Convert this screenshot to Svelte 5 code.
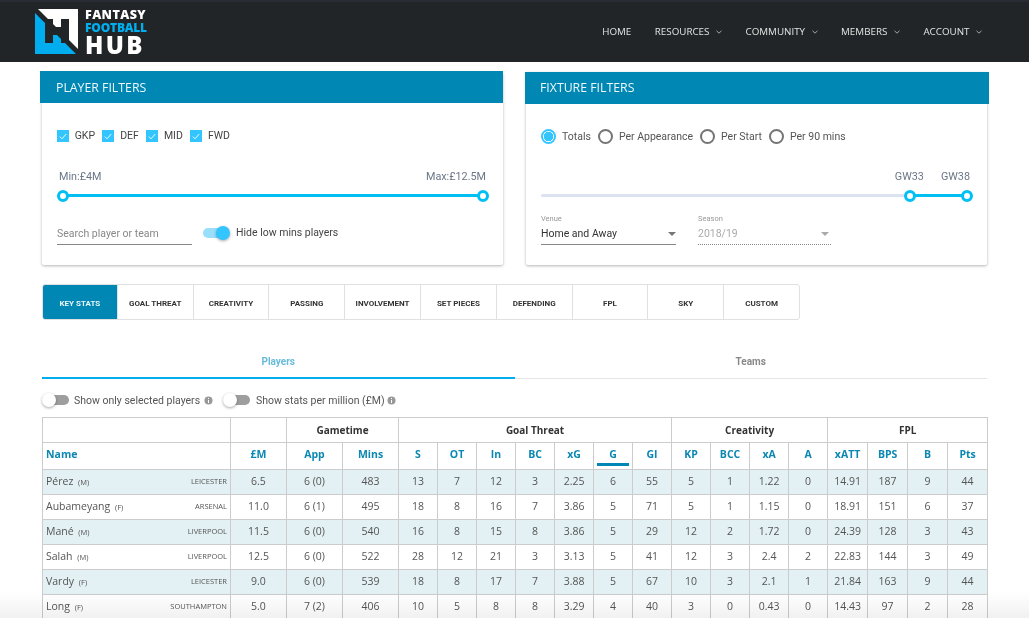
<script>
  const nav = [
    { label: 'Home', caret: false },
    { label: 'Resources', caret: true },
    { label: 'Community', caret: true },
    { label: 'Members', caret: true },
    { label: 'Account', caret: true }
  ];
  const positions = ['GKP', 'DEF', 'MID', 'FWD'];
  const modes = ['Totals', 'Per Appearance', 'Per Start', 'Per 90 mins'];
  const tabs = ['Key Stats', 'Goal Threat', 'Creativity', 'Passing', 'Involvement', 'Set Pieces', 'Defending', 'FPL', 'Sky', 'Custom'];
  const widths = [188, 56, 56, 56, 39, 39, 39, 39, 39, 39, 39, 39, 39, 39, 39, 40, 40, 40, 40];
  const groups = [
    { label: '', span: 1 },
    { label: '', span: 1 },
    { label: 'Gametime', span: 2 },
    { label: 'Goal Threat', span: 7 },
    { label: 'Creativity', span: 4 },
    { label: 'FPL', span: 4 }
  ];
  const columns = ['£M', 'App', 'Mins', 'S', 'OT', 'In', 'BC', 'xG', 'G', 'GI', 'KP', 'BCC', 'xA', 'A', 'xATT', 'BPS', 'B', 'Pts'];
  const rows = [
    { name: 'Pérez', pos: 'M', team: 'Leicester', stats: ['6.5', '6 (0)', 483, 13, 7, 12, 3, '2.25', 6, 55, 5, 1, '1.22', 0, '14.91', 187, 9, 44] },
    { name: 'Aubameyang', pos: 'F', team: 'Arsenal', stats: ['11.0', '6 (1)', 495, 18, 8, 16, 7, '3.86', 5, 71, 5, 1, '1.15', 0, '18.91', 151, 6, 37] },
    { name: 'Mané', pos: 'M', team: 'Liverpool', stats: ['11.5', '6 (0)', 540, 16, 8, 15, 8, '3.86', 5, 29, 12, 2, '1.72', 0, '24.39', 128, 3, 43] },
    { name: 'Salah', pos: 'M', team: 'Liverpool', stats: ['12.5', '6 (0)', 522, 28, 12, 21, 3, '3.13', 5, 41, 12, 3, '2.4', 2, '22.83', 144, 3, 49] },
    { name: 'Vardy', pos: 'F', team: 'Leicester', stats: ['9.0', '6 (0)', 539, 18, 8, 17, 7, '3.88', 5, 67, 10, 3, '2.1', 1, '21.84', 163, 9, 44] },
    { name: 'Long', pos: 'F', team: 'Southampton', stats: ['5.0', '7 (2)', 406, 10, 5, 8, 8, '3.29', 4, 40, 3, 0, '0.43', 0, '14.43', 97, 2, 28] }
  ];
</script>

<div class="page">
  <header class="topbar">
    <div class="logo">
      <svg width="45" height="45" viewBox="0 0 45 45">
        <path d="M3 0H43V40Z" fill="#fff" />
        <path d="M0 4V45H41Z" fill="#00aeef" />
        <path d="M10 10H18V18H26V10H34V34H26V26H18V34H10Z" fill="#212527" />
      </svg>
      <div class="wordmark">
        <span class="word-top">FANTASY</span>
        <span class="word-mid">FOOTBALL</span>
        <span class="word-hub">HUB</span>
      </div>
    </div>
    <nav class="nav">
      {#each nav as item}
        <span class="nav-item">
          {item.label}
          {#if item.caret}
            <svg width="6" height="4" viewBox="0 0 6 4"><path d="M.5.8 3 3.2 5.5.8" fill="none" stroke="#c9cbcc" stroke-width=".8" /></svg>
          {/if}
        </span>
      {/each}
    </nav>
  </header>

  <section class="filters">
    <div class="card left">
      <h2>Player Filters</h2>
      <div class="card-body">
        <div class="checks">
          {#each positions as p}
            <span class="check">
              <span class="box">
                <svg width="8" height="7" viewBox="0 0 8 7"><path d="M.8 3.6 3 5.8 7.2 1" fill="none" stroke="#fff" stroke-width=".9" /></svg>
              </span>
              {p}
            </span>
          {/each}
        </div>
        <div class="range-labels">
          <span>Min:£4M</span>
          <span>Max:£12.5M</span>
        </div>
        <div class="slider full">
          <span class="handle"></span>
          <span class="handle"></span>
        </div>
        <div class="search-row">
          <div class="search">Search player or team</div>
          <span class="switch on"><span class="knob"></span></span>
          <span class="switch-label">Hide low mins players</span>
        </div>
      </div>
    </div>

    <div class="card right">
      <h2>Fixture Filters</h2>
      <div class="card-body">
        <div class="radios">
          {#each modes as mode, i}
            <span class="radio" class:selected={i === 0}>
              <span class="ring"></span>
              {mode}
            </span>
          {/each}
        </div>
        <div class="gw-labels">
          <span>GW33</span>
          <span>GW38</span>
        </div>
        <div class="slider partial">
          <span class="fill">
            <span class="handle"></span>
            <span class="handle"></span>
          </span>
        </div>
        <div class="selects">
          <div class="select venue">
            <span class="select-label">Venue</span>
            <span class="select-value">Home and Away <i class="arrow"></i></span>
          </div>
          <div class="select season">
            <span class="select-label">Season</span>
            <span class="select-value">2018/19 <i class="arrow"></i></span>
          </div>
        </div>
      </div>
    </div>
  </section>

  <div class="stat-tabs">
    {#each tabs as tab, i}
      <span class="stat-tab" class:active={i === 0}>{tab}</span>
    {/each}
  </div>

  <div class="view-tabs">
    <span class="view-tab current">Players</span>
    <span class="view-tab">Teams</span>
  </div>

  <div class="toggles">
    <span class="switch off"><span class="knob"></span></span>
    <span class="toggle-text">Show only selected players</span>
    <svg class="info" width="9" height="9" viewBox="0 0 9 9"><circle cx="4.5" cy="4.5" r="4" fill="#999" /><path d="M4.5 2v1M4.5 4v3" stroke="#fff" stroke-width="1" /></svg>
    <span class="switch off second"><span class="knob"></span></span>
    <span class="toggle-text">Show stats per million (£M)</span>
    <svg class="info last" width="9" height="9" viewBox="0 0 9 9"><circle cx="4.5" cy="4.5" r="4" fill="#999" /><path d="M4.5 2v1M4.5 4v3" stroke="#fff" stroke-width="1" /></svg>
  </div>

  <table class="stats">
    <colgroup>
      {#each widths as w}
        <col style="width: {w}px" />
      {/each}
    </colgroup>
    <thead>
      <tr class="group-row">
        {#each groups as g}
          <th colspan={g.span}>{g.label}</th>
        {/each}
      </tr>
      <tr class="col-row">
        <th class="name-head">Name</th>
        {#each columns as c}
          <th><span class:sorted={c === 'G'}>{c}</span></th>
        {/each}
      </tr>
    </thead>
    <tbody>
      {#each rows as row}
        <tr>
          <td class="player">
            <div class="player-cell">
              <span>{row.name} <small>({row.pos})</small></span>
              <span class="team">{row.team}</span>
            </div>
          </td>
          {#each row.stats as s}
            <td>{s}</td>
          {/each}
        </tr>
      {/each}
    </tbody>
  </table>

  <div class="fade"></div>
</div>

<style>
  :global(body) {
    margin: 0;
    background: #fff;
  }

  .page {
    position: relative;
    height: 618px;
    overflow: hidden;
    font-family: Roboto, sans-serif;
    color: #444;
  }

  .topbar {
    height: 62px;
    box-sizing: border-box;
    border-top: 2px solid #282b31;
    background: #212527;
    display: flex;
    align-items: center;
    justify-content: space-between;
    padding: 0 47px 0 35px;
  }

  .logo {
    display: flex;
    align-items: center;
    gap: 5px;
    margin-top: -1px;
  }

  .wordmark {
    display: flex;
    flex-direction: column;
    font-family: 'Open Sans', sans-serif;
    font-weight: 800;
    line-height: 1;
    color: #fff;
  }

  .word-top {
    font-size: 12.5px;
    line-height: 14px;
    letter-spacing: 0.4px;
  }

  .word-mid {
    font-size: 12px;
    line-height: 11px;
    letter-spacing: -0.2px;
    color: #00aeef;
  }

  .word-hub {
    font-size: 24px;
    line-height: 23px;
    font-weight: 800;
    letter-spacing: 2.4px;
  }

  .nav {
    display: flex;
    gap: 23.5px;
    margin-top: -2px;
    font-family: 'Open Sans', sans-serif;
    font-size: 9.8px;
    font-weight: 500;
    color: #e2e3e3;
    text-transform: uppercase;
  }

  .nav-item svg {
    margin-left: 4px;
    vertical-align: 1px;
  }

  .filters {
    display: flex;
    align-items: flex-start;
    gap: 23px;
    padding: 10px 0 0 40px;
  }

  .card {
    height: 193px;
    background: #fff;
    border-radius: 0 0 2px 2px;
    box-shadow: 0 1px 3px rgba(0, 0, 0, 0.3);
  }

  .card.left {
    width: 461px;
    margin-left: 2px;
  }

  .card.right {
    width: 461px;
  }

  .card h2 {
    margin: -1px 0 0 -2px;
    height: 32px;
    background: #0087b3;
    color: #eef7fa;
    font-family: 'Open Sans', sans-serif;
    font-size: 12.3px;
    font-weight: 500;
    line-height: 33px;
    padding-left: 16px;
    text-transform: uppercase;
  }

  .card.right h2 {
    margin: 0 -2px 0 -1px;
    height: 32px;
    line-height: 32px;
    padding-left: 15px;
  }

  .card-body {
    padding: 27px 15px 0;
  }

  .checks {
    display: flex;
    font-size: 10.5px;
    color: #444;
    height: 12px;
    line-height: 12px;
  }

  .check {
    display: flex;
    align-items: center;
    gap: 5.7px;
    margin-right: 7.4px;
  }

  .box {
    width: 12px;
    height: 12px;
    background: #33c5ff;
    display: flex;
    align-items: center;
    justify-content: center;
  }

  .range-labels,
  .gw-labels {
    display: flex;
    justify-content: space-between;
    font-size: 10.8px;
    color: #6b7688;
    line-height: 12px;
  }

  .range-labels {
    margin-top: 29px;
    padding: 0 2px 0 2px;
  }

  .gw-labels {
    justify-content: flex-end;
    gap: 17px;
    margin-top: 28px;
    padding-right: 2px;
  }

  .slider {
    position: relative;
    height: 3px;
    border-radius: 2px;
    background: #dbe2f2;
  }

  .slider.full {
    margin: 11px 5px 0 6px;
    background: #00c0f3;
    display: flex;
    justify-content: space-between;
    align-items: center;
  }

  .slider.partial {
    margin: 11px 5px 0 0;
    display: flex;
    justify-content: flex-end;
  }

  .fill {
    width: 57px;
    height: 3px;
    background: #00c0f3;
    display: flex;
    justify-content: space-between;
    align-items: center;
  }

  .handle {
    width: 6px;
    height: 6px;
    flex: none;
    box-sizing: content-box;
    border: 3px solid #00c0f3;
    border-radius: 50%;
    background: #fff;
    margin: 0 -6px;
  }

  .search-row {
    display: flex;
    align-items: center;
    margin-top: 26px;
  }

  .search {
    width: 135px;
    box-sizing: border-box;
    height: 22px;
    line-height: 21px;
    border-bottom: 1px solid #888;
    font-size: 10.5px;
    color: #888;
  }

  .switch {
    position: relative;
    display: inline-block;
    flex: none;
    height: 10px;
    border-radius: 5px;
  }

  .switch.on {
    width: 26px;
    margin: -3px 7px 0 11px;
    background: #99dffc;
  }

  .switch.on .knob {
    right: -1px;
    background: #33c5ff;
  }

  .switch.off {
    width: 23px;
    margin-left: 4px;
    background: #9e9e9e;
  }

  .switch.off .knob {
    left: -4px;
    background: #fff;
  }

  .knob {
    position: absolute;
    top: -2px;
    width: 14px;
    height: 14px;
    border-radius: 50%;
    box-shadow: 0 1px 3px rgba(0, 0, 0, 0.35);
  }

  .switch-label {
    margin-top: -3px;
    font-size: 10.5px;
    color: #444;
  }

  .radios {
    display: flex;
    font-size: 10.5px;
    margin-top: -2px;
    height: 14px;
    align-items: center;
  }

  .radio {
    display: flex;
    align-items: center;
    gap: 6px;
    margin-right: 7px;
    color: #555;
  }

  .ring {
    box-sizing: border-box;
    width: 15px;
    height: 15px;
    border: 2px solid #757575;
    border-radius: 50%;
    background: #fff;
  }

  .radio.selected .ring {
    border-color: #33c5ff;
    background: radial-gradient(circle, #33c5ff 0 4.5px, #fff 5px);
  }

  .selects {
    display: flex;
    gap: 22px;
    margin-top: 17px;
  }

  .select {
    display: flex;
    flex-direction: column;
    height: 31px;
    box-sizing: border-box;
  }

  .venue {
    width: 135px;
    border-bottom: 1px solid #888;
    color: #333;
  }

  .season {
    width: 133px;
    border-bottom: 1px dotted #888;
    color: #aaa;
  }

  .select-label {
    font-size: 7.5px;
    line-height: 10px;
    color: #999;
  }

  .select-value {
    position: relative;
    font-size: 10.5px;
    line-height: 17px;
    margin-top: 1px;
  }

  .arrow {
    position: absolute;
    right: 0;
    top: 7px;
    width: 0;
    height: 0;
    border: 4px solid transparent;
    border-top-color: #777;
    border-bottom: 0;
  }

  .season .arrow {
    border-top-color: #aaa;
    right: 2px;
  }

  .stat-tabs {
    display: flex;
    width: 756px;
    height: 34px;
    margin: 19px 0 0 42px;
    border: 1px solid #e0e0e0;
    border-radius: 3px;
    box-sizing: content-box;
  }

  .stat-tab {
    width: 76px;
    box-sizing: border-box;
    border-left: 1px solid #e0e0e0;
    padding-top: 2px;
    display: flex;
    align-items: center;
    justify-content: center;
    font-size: 8px;
    font-weight: 700;
    color: #333;
    text-transform: uppercase;
  }

  .stat-tab:first-child {
    border-left: 0;
    width: 74px;
  }

  .stat-tab.active {
    background: #0087b3;
    color: #eaf6fa;
    border-radius: 2px 0 0 2px;
  }

  .view-tabs {
    display: flex;
    width: 945px;
    margin: 23px 0 0 42px;
    border-bottom: 1px solid #e4e4e4;
  }

  .view-tab {
    flex: 1;
    height: 35px;
    line-height: 37px;
    text-align: center;
    font-size: 10px;
    font-weight: 700;
    color: #888;
  }

  .view-tab.current {
    box-sizing: border-box;
    height: 36px;
    margin-bottom: -1px;
    border-bottom: 2px solid #00aeef;
    color: #68bcd9;
  }

  .toggles {
    display: flex;
    align-items: center;
    height: 16px;
    margin: 13px 0 0 42px;
    font-size: 10.5px;
    color: #555;
  }

  .toggle-text {
    margin-left: 5px;
  }

  .info {
    margin-left: 4px;
  }

  .info.last {
    margin-left: 2px;
  }

  .switch.second {
    margin-left: 14px;
  }

  .switch.second + .toggle-text {
    margin-left: 6px;
  }

  .stats {
    table-layout: fixed;
    border-collapse: collapse;
    width: 945px;
    margin: 9px 0 0 42px;
    font-family: 'Open Sans', sans-serif;
    font-size: 10.5px;
    color: #555;
  }

  .stats th,
  .stats td {
    border: 1px solid #ccc;
    padding: 0 0 2px;
    text-align: center;
  }

  .stats .group-row th {
    height: 24px;
    padding: 0;
    font-size: 10px;
    font-weight: 700;
    color: #333;
  }

  .stats .col-row th {
    position: relative;
    height: 22px;
    padding-bottom: 4px;
    font-size: 10.5px;
    font-weight: 700;
    color: #0a87b2;
  }

  .stats .col-row th.name-head {
    text-align: left;
    padding-left: 3px;
  }

  .sorted::after {
    content: '';
    position: absolute;
    left: 3px;
    right: 3px;
    bottom: 3px;
    height: 3px;
    background: #0087b3;
  }

  .stats td {
    height: 22px;
  }

  tbody tr:nth-child(odd) {
    background: #e3f0f4;
  }

  .stats td.player {
    padding: 0 3px 2px;
    font-size: 10.5px;
  }

  .player-cell {
    display: flex;
    align-items: center;
    justify-content: space-between;
  }

  small {
    font-size: 7.5px;
    margin-left: 2px;
  }

  .team {
    font-size: 7.5px;
    text-transform: uppercase;
  }

  .fade {
    position: absolute;
    left: 0;
    right: 0;
    bottom: 0;
    height: 26px;
    background: linear-gradient(#fff, #f1f1f1);
    mix-blend-mode: multiply;
    pointer-events: none;
  }
</style>
